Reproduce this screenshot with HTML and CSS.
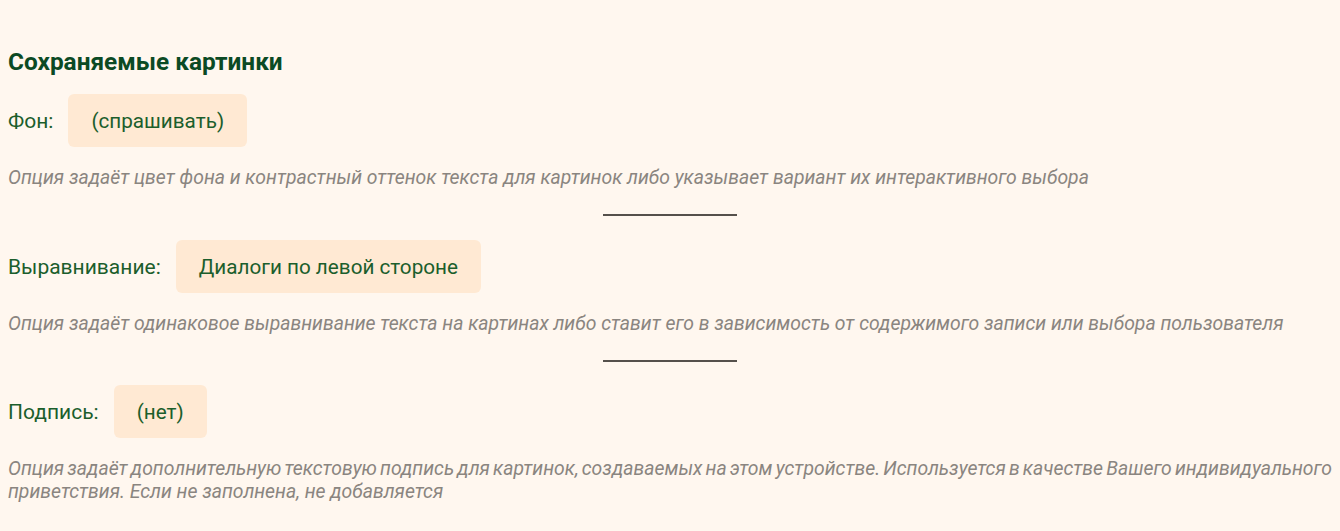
FILE: index.html
```html
<!DOCTYPE html>
<html lang="ru">
<head>
<meta charset="utf-8">
<link rel="stylesheet" href="styles.css">
</head>
<body>
<main class="page">
  <h2 class="title">Сохраняемые картинки</h2>

  <section class="option">
    <div class="row">
      <span class="label">Фон:</span>
      <button class="choice">(спрашивать)</button>
    </div>
    <p class="desc">Опция задаёт цвет фона и контрастный оттенок текста для картинок либо указывает вариант их интерактивного выбора</p>
  </section>
  <hr class="divider">

  <section class="option">
    <div class="row">
      <span class="label">Выравнивание:</span>
      <button class="choice">Диалоги по левой стороне</button>
    </div>
    <p class="desc">Опция задаёт одинаковое выравнивание текста на картинах либо ставит его в зависимость от содержимого записи или выбора пользователя</p>
  </section>
  <hr class="divider">

  <section class="option">
    <div class="row">
      <span class="label">Подпись:</span>
      <button class="choice">(нет)</button>
    </div>
    <p class="desc desc--justify">Опция задаёт дополнительную текстовую подпись для картинок, создаваемых на этом устройстве. Используется в качестве Вашего индивидуального приветствия. Если не заполнена, не добавляется</p>
  </section>
</main>
</body>
</html>
```

FILE: styles.css
```css
html, body {
  margin: 0;
  padding: 0;
  background: #fff7ef;
}
body {
  font-family: Roboto, "Noto Sans", sans-serif;
}
.page {
  padding: 48px 8px 0 8px;
}
.title {
  margin: 0 0 18px 0;
  font-size: 24.4px;
  font-weight: 700;
  line-height: 28px;
  color: #0b4a24;
}
.option {
  display: flex;
  flex-direction: column;
}
.row {
  display: flex;
  align-items: center;
  gap: 15px;
}
.label {
  font-size: 21px;
  color: #1b5e2c;
}
.choice {
  height: 53px;
  padding: 0 23px;
  border: none;
  border-radius: 6px;
  background: #ffe9d3;
  color: #1b5e2c;
  font-family: Roboto, "Noto Sans", sans-serif;
  font-size: 20.7px;
}
.desc {
  margin: 19px 0 0 0;
  font-size: 19.4px;
  font-style: italic;
  line-height: 23px;
  color: #8a8580;
}
.desc--justify {
  text-align: justify;
}
.desc--justify::first-line {
  word-spacing: -3px;
}
.divider {
  width: 134px;
  height: 2px;
  margin: 25px auto 24px auto;
  border: none;
  background: #55504b;
}
.divider:last-of-type {
  margin-bottom: 23px;
}
```
